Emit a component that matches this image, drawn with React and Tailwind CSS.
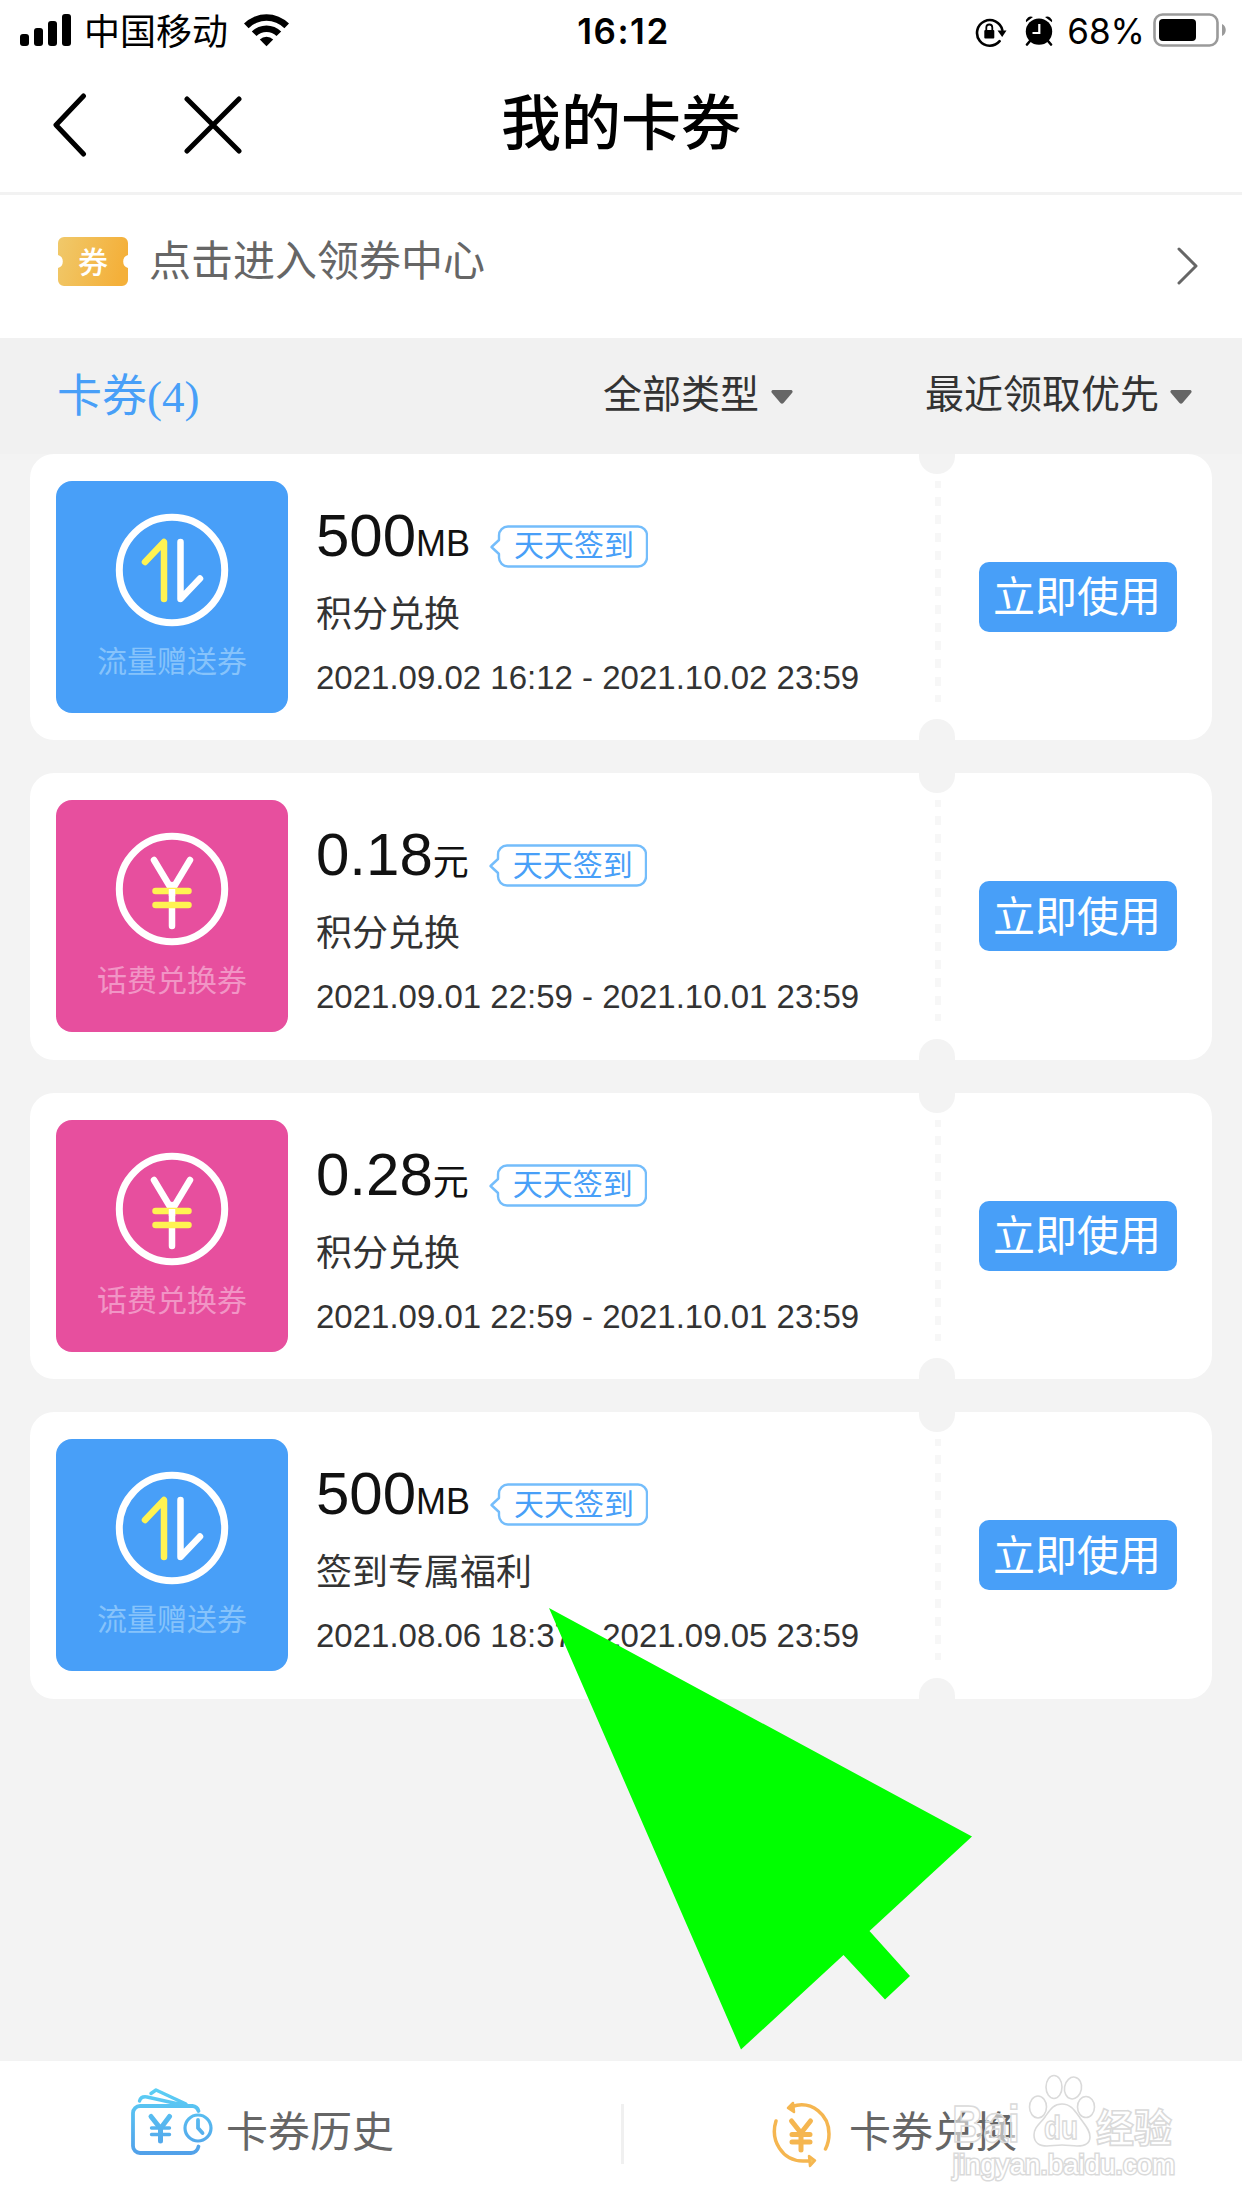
import React from "react";

const coupons = [
  {
    id: 1,
    type: "data",
    amount: "500",
    unit: "MB",
    source: "积分兑换",
    period: "2021.09.02 16:12 - 2021.10.02 23:59",
  },
  {
    id: 2,
    type: "fee",
    amount: "0.18",
    unit: "元",
    source: "积分兑换",
    period: "2021.09.01 22:59 - 2021.10.01 23:59",
  },
  {
    id: 3,
    type: "fee",
    amount: "0.28",
    unit: "元",
    source: "积分兑换",
    period: "2021.09.01 22:59 - 2021.10.01 23:59",
  },
  {
    id: 4,
    type: "data",
    amount: "500",
    unit: "MB",
    source: "签到专属福利",
    period: "2021.08.06 18:37 - 2021.09.05 23:59",
  },
];

function StatusBar() {
  return (
    <div className="flex h-[60px] items-center text-black">
      <div className="flex flex-1 items-center pl-5">
        <svg width="52" height="34" viewBox="0 0 52 34">
          <rect x="0" y="21" width="9" height="12" rx="3" />
          <rect x="14" y="15" width="9" height="18" rx="3" />
          <rect x="28" y="8" width="9" height="25" rx="3" />
          <rect x="42" y="1" width="9" height="32" rx="3" />
        </svg>
        <span className="ml-3 mt-[5px] text-[36px] leading-none">中国移动</span>
        <svg className="ml-4" width="45" height="34" viewBox="0 0 45 34">
          <path d="M0 10.5a32 32 0 0 1 45 0l-4.6 4.7a25.4 25.4 0 0 0-35.8 0z" />
          <path d="M7.8 18.4a21 21 0 0 1 29.4 0l-4.7 4.7a14.3 14.3 0 0 0-20 0z" />
          <path d="M15.8 26.4a9.6 9.6 0 0 1 13.4 0L22.5 33.2z" />
        </svg>
      </div>
      <span className="mt-[3px] font-[Inter,sans-serif] text-[35px] font-semibold leading-none tracking-[1.5px]">16:12</span>
      <div className="flex flex-1 items-center justify-end pr-[15px]">
        <svg className="mt-[3px]" width="32" height="32" viewBox="0 0 32 32">
          <path
            d="M24.6 25.2A12.8 12.8 0 1 1 27.3 14"
            fill="none"
            stroke="#000"
            strokeWidth="2.6"
            strokeLinecap="round"
          />
          <path d="M22.5 14.5h9l-4.3 6.5z" />
          <rect x="9.3" y="14" width="10" height="8.5" rx="1" />
          <path d="M11.3 14.5v-3a3 3 0 0 1 6 0v3" fill="none" stroke="#000" strokeWidth="1.8" />
        </svg>
        <svg className="ml-[18px]" width="28" height="31" viewBox="0 0 28 31">
          <path d="M1 7.2A5 5 0 0 1 8 2z" />
          <path d="M27 7.2A5 5 0 0 0 20 2z" />
          <path d="M5 26l-3 3.5M23 26l3 3.5" stroke="#000" strokeWidth="2.6" strokeLinecap="round" />
          <circle cx="14" cy="16.6" r="13.2" />
          <path d="M14.3 9v9H7.5" fill="none" stroke="#fff" strokeWidth="2.2" />
        </svg>
        <span className="ml-[14px] mt-[3px] font-[Inter,sans-serif] text-[35px] leading-none">68%</span>
        <svg className="ml-2" width="74" height="34" viewBox="0 0 74 34">
          <rect x="1.5" y="1.5" width="63" height="31" rx="8" fill="none" stroke="#9a9a9a" strokeWidth="2.6" />
          <rect x="6" y="6" width="37" height="22" rx="4" />
          <path d="M69 11c5 2 5 10 0 12z" fill="#9a9a9a" />
        </svg>
      </div>
    </div>
  );
}

function Header() {
  return (
    <div className="flex h-[135px] items-center border-b-[3px] border-[#f2f2f2] pb-[3px]">
      <div className="flex w-[501px] items-center pl-[52px]">
        <svg width="36" height="64" viewBox="0 0 36 64" fill="none" stroke="#000" strokeWidth="5" strokeLinecap="round" strokeLinejoin="round">
          <path d="M31.5 3L4 32l27.5 29" />
        </svg>
        <svg className="ml-24" width="58" height="58" viewBox="0 0 58 58" fill="none" stroke="#000" strokeWidth="5" strokeLinecap="round">
          <path d="M3 3l52 52M55 3L3 55" />
        </svg>
      </div>
      <h1 className="text-[60px] font-medium leading-none text-black">我的卡券</h1>
    </div>
  );
}

function CenterLink() {
  return (
    <div className="flex h-[143px] items-center pb-[10px] pl-[58px] pr-[43px]">
      <div className="grid place-items-center">
        <svg className="[grid-area:1/1]" width="70" height="49" viewBox="0 0 70 49">
          <defs>
            <linearGradient id="ticket" x1="0" x2="1" y1="0" y2="0.2">
              <stop offset="0" stopColor="#f0c96b" />
              <stop offset="1" stopColor="#f4b03a" />
            </linearGradient>
          </defs>
          <path
            d="M6 0h58a6 6 0 0 1 6 6v12a6.8 6.8 0 0 0 0 13v12a6 6 0 0 1-6 6H6a6 6 0 0 1-6-6V31a6.8 6.8 0 0 0 0-13V6a6 6 0 0 1 6-6z"
            fill="url(#ticket)"
          />
        </svg>
        <span className="mt-[2px] text-[30px] font-medium leading-none text-white [grid-area:1/1]">券</span>
      </div>
      <span className="ml-[21px] flex-1 text-[42px] leading-none text-[#666]">点击进入领券中心</span>
      <svg className="mt-[9px]" width="22" height="38" viewBox="0 0 22 38" fill="none" stroke="#666" strokeWidth="3" strokeLinecap="round" strokeLinejoin="round">
        <path d="M2 2l17 17L2 36" />
      </svg>
    </div>
  );
}

function Caret() {
  return (
    <svg className="mt-[5px]" width="22" height="14" viewBox="0 0 22 14">
      <path d="M1.5 0h19q2 1 0.5 3l-8.5 10q-1.500 1.500-3 0L1 3Q-0.500 1 1.500 0z" fill="#666" />
    </svg>
  );
}

function FilterBar() {
  return (
    <div className="flex h-[115.5px] items-center bg-[#f1f1f1] pb-[2px] pl-[57px] pr-[50px] text-[39px] leading-none text-[#333]">
      <div className="mt-[6px] flex-1 font-['Liberation_Serif','Noto_Sans_CJK_SC',serif] text-[45px] text-[#489ff8]">卡券(4)</div>
      <div className="flex items-center gap-3">
        <span>全部类型</span>
        <Caret />
      </div>
      <div className="ml-[132px] flex items-center gap-[11px]">
        <span>最近领取优先</span>
        <Caret />
      </div>
    </div>
  );
}

function DataIcon() {
  return (
    <svg width="114" height="114" viewBox="0 0 114 114" fill="none" strokeLinecap="round" strokeLinejoin="round">
      <circle cx="57" cy="57" r="52.7" stroke="#fff" strokeWidth="7" />
      <path d="M30 49L49 29V86" stroke="#fff352" strokeWidth="6.5" />
      <path d="M65.5 29V86L85 65.5" stroke="#fff" strokeWidth="6.5" />
    </svg>
  );
}

function FeeIcon() {
  return (
    <svg width="114" height="114" viewBox="0 0 114 114" fill="none" strokeLinecap="round">
      <circle cx="57" cy="57" r="52.7" stroke="#fff" strokeWidth="7" />
      <path d="M57 53V94M39 28L57 58L75 28" stroke="#fff" strokeWidth="6.5" strokeLinejoin="round" />
      <path d="M40.5 59H73.5M40.5 73H73.5" stroke="#fff352" strokeWidth="6.5" />
      <path d="M57 57V64" stroke="#fff" strokeWidth="6.5" strokeLinecap="butt" />
    </svg>
  );
}

function SignTag() {
  return (
    <span className="grid items-center">
      <svg className="[grid-area:1/1]" width="158" height="43" viewBox="0 0 158 43" fill="none">
        <path
          d="M18 1.5H148a9 9 0 0 1 9 9V32.5a9 9 0 0 1-9 9H18a9 9 0 0 1-9-9V29L1.5 22L9 15V10.5a9 9 0 0 1 9-9z"
          stroke="#74bdfb"
          strokeWidth="2.4"
          strokeLinejoin="round"
        />
      </svg>
      <span className="pl-[24px] text-[30px] leading-none text-[#489ff8] [grid-area:1/1]">天天签到</span>
    </span>
  );
}

function CouponTile({ type }) {
  const isData = type === "data";
  return (
    <div
      className={`mt-[27px] flex h-[232px] w-[232px] flex-col items-center rounded-2xl pt-[32px] ${
        isData ? "bg-[#489ff8]" : "bg-[#e74f9e]"
      }`}
    >
      {isData ? <DataIcon /> : <FeeIcon />}
      <span className={`mt-5 text-[30px] leading-none ${isData ? "text-[#86c3fb]" : "text-[#f195c5]"}`}>
        {isData ? "流量赠送券" : "话费兑换券"}
      </span>
    </div>
  );
}

function CouponCard({ coupon }) {
  return (
    <div className="flex h-[286.5px] rounded-[24px] bg-white pl-[26px]">
      <CouponTile type={coupon.type} />
      <div className="ml-7 w-[603px] pt-[47px] text-[#333]">
        <div className="flex h-[70px] whitespace-nowrap text-[#111]">
          <div className="text-[60px] leading-[70px]">
            {coupon.amount}
            <span className="text-[36px] leading-none">{coupon.unit}</span>
          </div>
          <div className="ml-5 mt-[24px]">
            <SignTag />
          </div>
        </div>
        <div className="mt-[24px] text-[36px] leading-[40px]">{coupon.source}</div>
        <div className="mt-[24px] whitespace-nowrap text-[33px] leading-[38px]">{coupon.period}</div>
      </div>
      <div className="flex w-9 flex-col items-center">
        <div className="h-5 w-9 rounded-b-[18px] bg-[#f3f3f3]" />
        <div className="ml-[2px] mt-[7px] h-[221px] w-[6px] bg-[repeating-linear-gradient(to_bottom,#f7f7f7_0,#f7f7f7_7px,#ffffff_7px,#ffffff_16px,#f7f7f7_16px,#f7f7f7_18px)]" />
        <div className="mt-auto h-[21px] w-9 rounded-t-[18px] bg-[#f3f3f3]" />
      </div>
      <button className="ml-6 mt-[108px] h-[70px] w-[198px] rounded-[10px] bg-[#489ff8] pr-[2px] pt-[3px] text-[42px] leading-none text-white">
        立即使用
      </button>
    </div>
  );
}

function WalletIcon() {
  return (
    <svg width="82" height="68" viewBox="0 0 82 68" fill="none" strokeLinecap="round" strokeLinejoin="round">
      <defs>
        <linearGradient id="wallet" gradientUnits="userSpaceOnUse" x1="0" x2="0" y1="0" y2="68">
          <stop offset="0" stopColor="#5cd0f5" />
          <stop offset="1" stopColor="#519fe9" />
        </linearGradient>
      </defs>
      <g stroke="url(#wallet)" strokeWidth="3.8">
        <path d="M67.500 23a7 7 0 0 0-6-5H9a7 7 0 0 0-7 7V58a7 7 0 0 0 7 7H60a8 8 0 0 0 7.500-6.500" />
        <path d="M8.500 13Q10 8 16 9L52 17M20 5.500L25 2L55 16" strokeWidth="3.4" />
        <circle cx="67" cy="40" r="13" strokeWidth="3.2" />
        <path d="M67 32v8l4.500 5" />
        <path d="M20 28.500l9.500 12L38.500 28.500M29.500 40V53" strokeWidth="5" />
        <path d="M20.500 40H38.500M20.500 46.500H38.500" strokeWidth="3.4" />
      </g>
    </svg>
  );
}

function ExchangeIcon() {
  return (
    <svg width="60" height="68" viewBox="0 0 60 68" fill="none" stroke="#f5b650" strokeLinecap="round" strokeLinejoin="round">
      <path d="M20 6.5C40 0 57 15 57 34q0 8-3.5 15" strokeWidth="3.5" />
      <path d="M4 21C-2 40 10 61 31 61h7" strokeWidth="3.5" />
      <path d="M21 3l-5 5 6 4z" fill="#f5b650" strokeWidth="2.5" />
      <path d="M37 56l6 4.5-5 5.5z" fill="#f5c35a" strokeWidth="2.5" />
      <path d="M19.5 21l9.5 12 9.5-12M29 33V50M20 34.5H38M20 42H38" strokeWidth="5" />
    </svg>
  );
}

function BottomBar() {
  return (
    <div className="flex h-[147px] bg-white text-[42px] leading-none text-[#666]">
      <div className="flex w-[621px] items-start pl-[131px] pt-[27px]">
        <WalletIcon />
        <span className="ml-[13px] mt-[24px]">卡券历史</span>
      </div>
      <div className="mt-[43px] h-[60px] w-[3px] bg-[#f0f0f0]" />
      <div className="flex flex-1 items-start pl-[148px] pt-[39px]">
        <ExchangeIcon />
        <span className="ml-[17px] mt-[12px]">卡券兑换</span>
      </div>
    </div>
  );
}

function Watermark() {
  return (
    <svg
      className="absolute left-[945px] top-[2070px]"
      width="240"
      height="120"
      viewBox="0 0 240 120"
      fill="#ffffff"
      fillOpacity="0.55"
      stroke="#dadada"
      strokeWidth="1.6"
      fontFamily="'Liberation Sans', 'Noto Sans CJK SC', sans-serif"
    >
      <text x="7" y="72" fontSize="51" fontWeight="700" textLength="68" lengthAdjust="spacingAndGlyphs">
        Bai
      </text>
      <ellipse cx="93" cy="37" rx="8.500" ry="11" />
      <ellipse cx="109" cy="17" rx="8" ry="11.500" />
      <ellipse cx="128" cy="18" rx="8.500" ry="11" transform="rotate(10 128 18)" />
      <ellipse cx="141" cy="37" rx="8.500" ry="10.500" />
      <path d="M117 34c9 0 13 7 18 14s10 12 10 19c0 8-7 9-13 9-5 0-9-1-15-1s-10 1-15 1c-7 0-13-3-13-11 0-8 6-11 11-18s8-13 17-13z" />
      <text x="99" y="69" fontSize="33" fontWeight="700" textLength="34" lengthAdjust="spacingAndGlyphs">
        du
      </text>
      <text x="151" y="72" fontSize="39" fontWeight="700" textLength="76" lengthAdjust="spacingAndGlyphs">
        经验
      </text>
      <text x="8" y="104" fontSize="27" textLength="222" lengthAdjust="spacingAndGlyphs" strokeWidth="3" paintOrder="stroke" fillOpacity="1">
        jingyan.baidu.com
      </text>
    </svg>
  );
}

export default function App() {
  return (
    <div className="relative flex h-[2208px] w-[1242px] flex-col overflow-hidden bg-white font-['Liberation_Sans','Noto_Sans_CJK_SC',sans-serif]">
      <StatusBar />
      <Header />
      <CenterLink />
      <FilterBar />
      <div className="flex flex-1 flex-col gap-[33.1px] bg-[#f3f3f3] px-[30px]">
        {coupons.map((coupon) => (
          <CouponCard key={coupon.id} coupon={coupon} />
        ))}
      </div>
      <BottomBar />

      {/* pointer on top of the last coupon */}
      <svg className="absolute left-[549px] top-[1607px]" width="424" height="443" viewBox="549 1607 424 443">
        <path d="M549 1608L972 1836.5L869.5 1931L910 1976L885 1999.5L843.5 1955L741 2049.5z" fill="#00ff00" />
      </svg>
      <Watermark />
    </div>
  );
}
